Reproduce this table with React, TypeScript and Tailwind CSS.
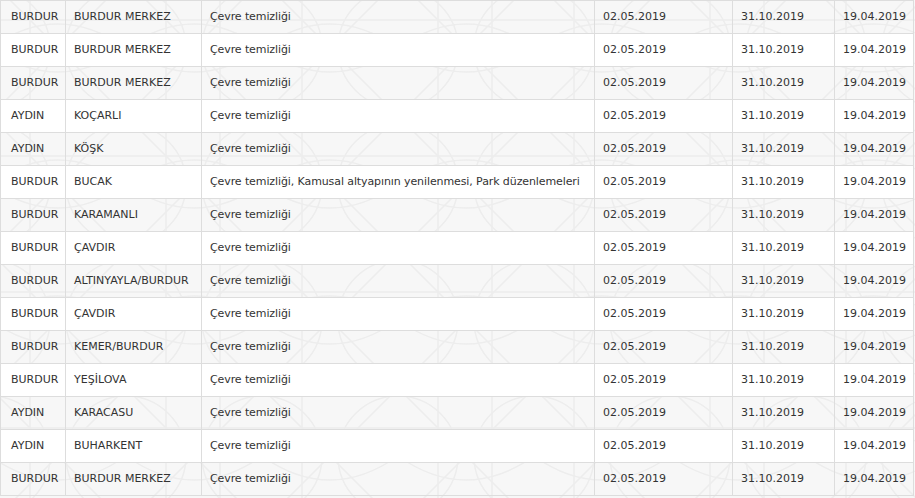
import React from 'react';

type Row = [string, string, string];

const rows: Row[] = [
  ['BURDUR', 'BURDUR MERKEZ', 'Çevre temizliği'],
  ['BURDUR', 'BURDUR MERKEZ', 'Çevre temizliği'],
  ['BURDUR', 'BURDUR MERKEZ', 'Çevre temizliği'],
  ['AYDIN', 'KOÇARLI', 'Çevre temizliği'],
  ['AYDIN', 'KÖŞK', 'Çevre temizliği'],
  ['BURDUR', 'BUCAK', 'Çevre temizliği, Kamusal altyapının yenilenmesi, Park düzenlemeleri'],
  ['BURDUR', 'KARAMANLI', 'Çevre temizliği'],
  ['BURDUR', 'ÇAVDIR', 'Çevre temizliği'],
  ['BURDUR', 'ALTINYAYLA/BURDUR', 'Çevre temizliği'],
  ['BURDUR', 'ÇAVDIR', 'Çevre temizliği'],
  ['BURDUR', 'KEMER/BURDUR', 'Çevre temizliği'],
  ['BURDUR', 'YEŞİLOVA', 'Çevre temizliği'],
  ['AYDIN', 'KARACASU', 'Çevre temizliği'],
  ['AYDIN', 'BUHARKENT', 'Çevre temizliği'],
  ['BURDUR', 'BURDUR MERKEZ', 'Çevre temizliği'],
];

const PatternBackground: React.FC = () => (
  <svg className="absolute inset-0 h-full w-full" aria-hidden="true">
    <defs>
      <pattern id="geo" width="272" height="136" patternUnits="userSpaceOnUse" x="-10" y="-20">
        <g fill="none" stroke="#ededed" strokeWidth="1.5">
          <path d="M0 0 L136 136 M136 0 L0 136 M136 0 L272 136 M272 0 L136 136" />
          <path d="M0 68 Q68 20 136 68 Q204 116 272 68" />
          <path d="M0 68 Q68 116 136 68 Q204 20 272 68" />
          <path d="M40 0 V136 M176 0 V136 M230 0 V136" />
          <path d="M0 40 H272" />
          <circle cx="136" cy="68" r="60" />
          <circle cx="0" cy="68" r="60" />
          <circle cx="272" cy="68" r="60" />
        </g>
      </pattern>
    </defs>
    <rect width="100%" height="100%" fill="#f7f7f7" />
    <rect width="100%" height="100%" fill="url(#geo)" />
  </svg>
);

export default function App() {
  return (
    <div
      className="relative h-[498px] w-[915px] overflow-hidden text-[11px] text-[#333]"
      style={{ fontFamily: '"DejaVu Sans", Verdana, sans-serif' }}
    >
      <PatternBackground />
      <div className="relative w-[914px] border-b border-l border-r border-[#dddddd]">
        {rows.map((r, i) => (
          <div
            key={i}
            className={`grid h-[33px] grid-cols-[64px_136px_393px_138px_102px_1fr] border-t border-[#dddddd] ${
              i % 2 === 1 ? 'bg-white' : ''
            }`}
          >
            <div className="flex items-center pl-[10px]">{r[0]}</div>
            <div className="flex items-center border-l border-[#dddddd] pl-[8px]">{r[1]}</div>
            <div className="flex items-center border-l border-[#dddddd] pl-[8px] whitespace-nowrap tracking-[-0.1px]">{r[2]}</div>
            <div className="flex items-center border-l border-[#dddddd] pl-[8px]">02.05.2019</div>
            <div className="flex items-center border-l border-[#dddddd] pl-[8px]">31.10.2019</div>
            <div className="flex items-center border-l border-[#dddddd] pl-[8px]">19.04.2019</div>
          </div>
        ))}
      </div>
    </div>
  );
}
